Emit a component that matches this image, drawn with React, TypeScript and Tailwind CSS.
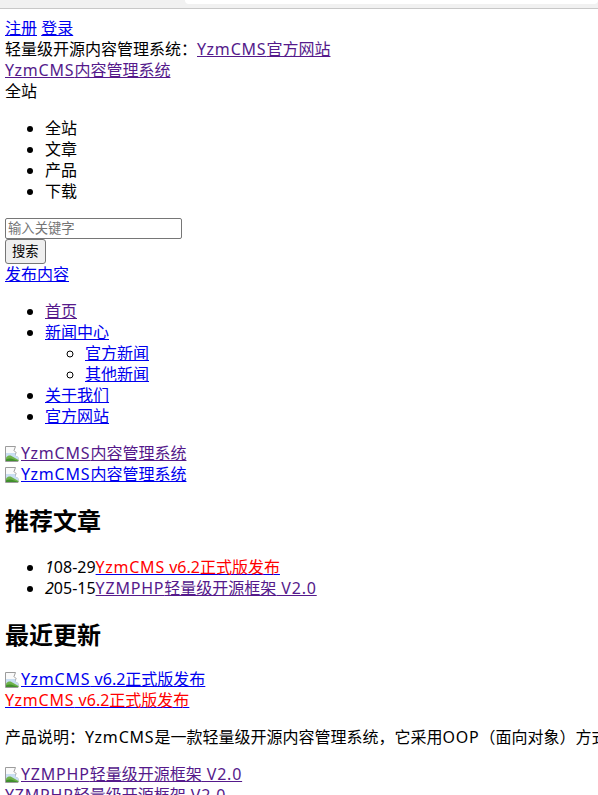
import React from "react";

const visited = "text-[#551a8b] underline";
const fresh = "text-[#0000ee] underline";

// Latin runs in the screenshot are a touch wider than Noto Sans
const Lat = ({ children }: { children: React.ReactNode }) => (
  <span className="tracking-[0.8px]">{children}</span>
);

const BrokenImage = () => (
  <svg width="16" height="16" viewBox="0 0 16 16" className="inline-block align-[-3px]">
    <path d="M0.5 0.5h10l-1.5 4 2 2-1 3 3 2v4h-12.5z" fill="#fafafa" stroke="#9c9c9c" />
    <path d="M1 7h9.2l0.4 2.5 2.9 2.1V15H1z" fill="#c9def2" />
    <path d="M1 15v-3.5c2-2 3.5-2.5 5.5-1.5l7 4V15z" fill="#6fb24a" />
    <path d="M1 15v-1.5c2.5-1.5 5-1.5 8 0l4.5 1.5z" fill="#3f8f2c" />
  </svg>
);

export default function App() {
  return (
    <div className="w-[598px] h-[795px] overflow-hidden bg-white text-black text-[16px] leading-[21px] font-['Noto_Sans','Noto_Sans_CJK_SC',sans-serif]">
      <div className="h-[9px] bg-[#f1f1f1] border-b border-[#c8c8c8]">
        <div className="ml-[185px] h-[4px] bg-white rounded-b-[4px]" />
      </div>
      <div className="px-[5px] pt-[9px] whitespace-nowrap">
        <div>
          <a className={fresh}>注册</a> <a className={fresh}>登录</a>
        </div>
        <div>
          轻量级开源内容管理系统：
          <a className={visited}>
            <Lat>YzmCMS</Lat>官方网站
          </a>
        </div>
        <div>
          <a className={visited}>
            <Lat>YzmCMS</Lat>内容管理系统
          </a>
        </div>
        <div>全站</div>
        <ul className="list-disc pl-[40px] my-[16px]">
          <li>全站</li>
          <li>文章</li>
          <li>产品</li>
          <li>下载</li>
        </ul>
        <div>
          <input
            placeholder="输入关键字"
            className="block w-[177px] h-[21px] border border-[#767676] rounded-[2px] px-[2px] text-[13.33px] placeholder:text-[#757575]"
          />
          <button className="block h-[25px] px-[6px] bg-[#efefef] border border-[#767676] rounded-[3px] text-[13.33px] leading-[21px] text-black">
            搜索
          </button>
        </div>
        <div>
          <a className={fresh}>发布内容</a>
        </div>
        <ul className="list-disc pl-[40px] my-[16px]">
          <li>
            <a className={visited}>首页</a>
          </li>
          <li>
            <a className={fresh}>新闻中心</a>
            <ul className="list-[circle] pl-[40px]">
              <li>
                <a className={fresh}>官方新闻</a>
              </li>
              <li>
                <a className={fresh}>其他新闻</a>
              </li>
            </ul>
          </li>
          <li>
            <a className={fresh}>关于我们</a>
          </li>
          <li>
            <a className={fresh}>官方网站</a>
          </li>
        </ul>
        <div>
          <a className={visited}>
            <BrokenImage />
            <Lat>YzmCMS</Lat>内容管理系统
          </a>
        </div>
        <div>
          <a className={fresh}>
            <BrokenImage />
            <Lat>YzmCMS</Lat>内容管理系统
          </a>
        </div>
        <h2 className="text-[24px] leading-[32px] font-bold my-[20px]">推荐文章</h2>
        <ul className="list-disc pl-[40px] my-[16px]">
          <li>
            <i>1</i>08-29
            <a className={fresh}>
              <span className="text-[#ff0000]">
                <Lat>YzmCMS</Lat> v6.2正式版发布
              </span>
            </a>
          </li>
          <li>
            <i>2</i>05-15
            <a className={visited}>
              <Lat>YZMPHP</Lat>轻量级开源框架<Lat> V2.0</Lat>
            </a>
          </li>
        </ul>
        <h2 className="text-[24px] leading-[32px] font-bold mt-[20px] mb-[18px]">最近更新</h2>
        <div>
          <a className={fresh}>
            <BrokenImage />
            <Lat>YzmCMS</Lat> v6.2正式版发布
          </a>
        </div>
        <div>
          <a className={fresh}>
            <span className="text-[#ff0000]">
              <Lat>YzmCMS</Lat> v6.2正式版发布
            </span>
          </a>
        </div>
        <p className="my-[16px]">
          产品说明：<Lat>YzmCMS</Lat>是一款轻量级开源内容管理系统，它采用<Lat>OOP</Lat>
          （面向对象）方式自主研发的<Lat>YZMPHP</Lat>框架开发，系统安全稳定。
        </p>
        <div>
          <a className={visited}>
            <BrokenImage />
            <Lat>YZMPHP</Lat>轻量级开源框架<Lat> V2.0</Lat>
          </a>
        </div>
        <div>
          <a className={visited}>
            <Lat>YZMPHP</Lat>轻量级开源框架<Lat> V2.0</Lat>
          </a>
        </div>
      </div>
    </div>
  );
}
